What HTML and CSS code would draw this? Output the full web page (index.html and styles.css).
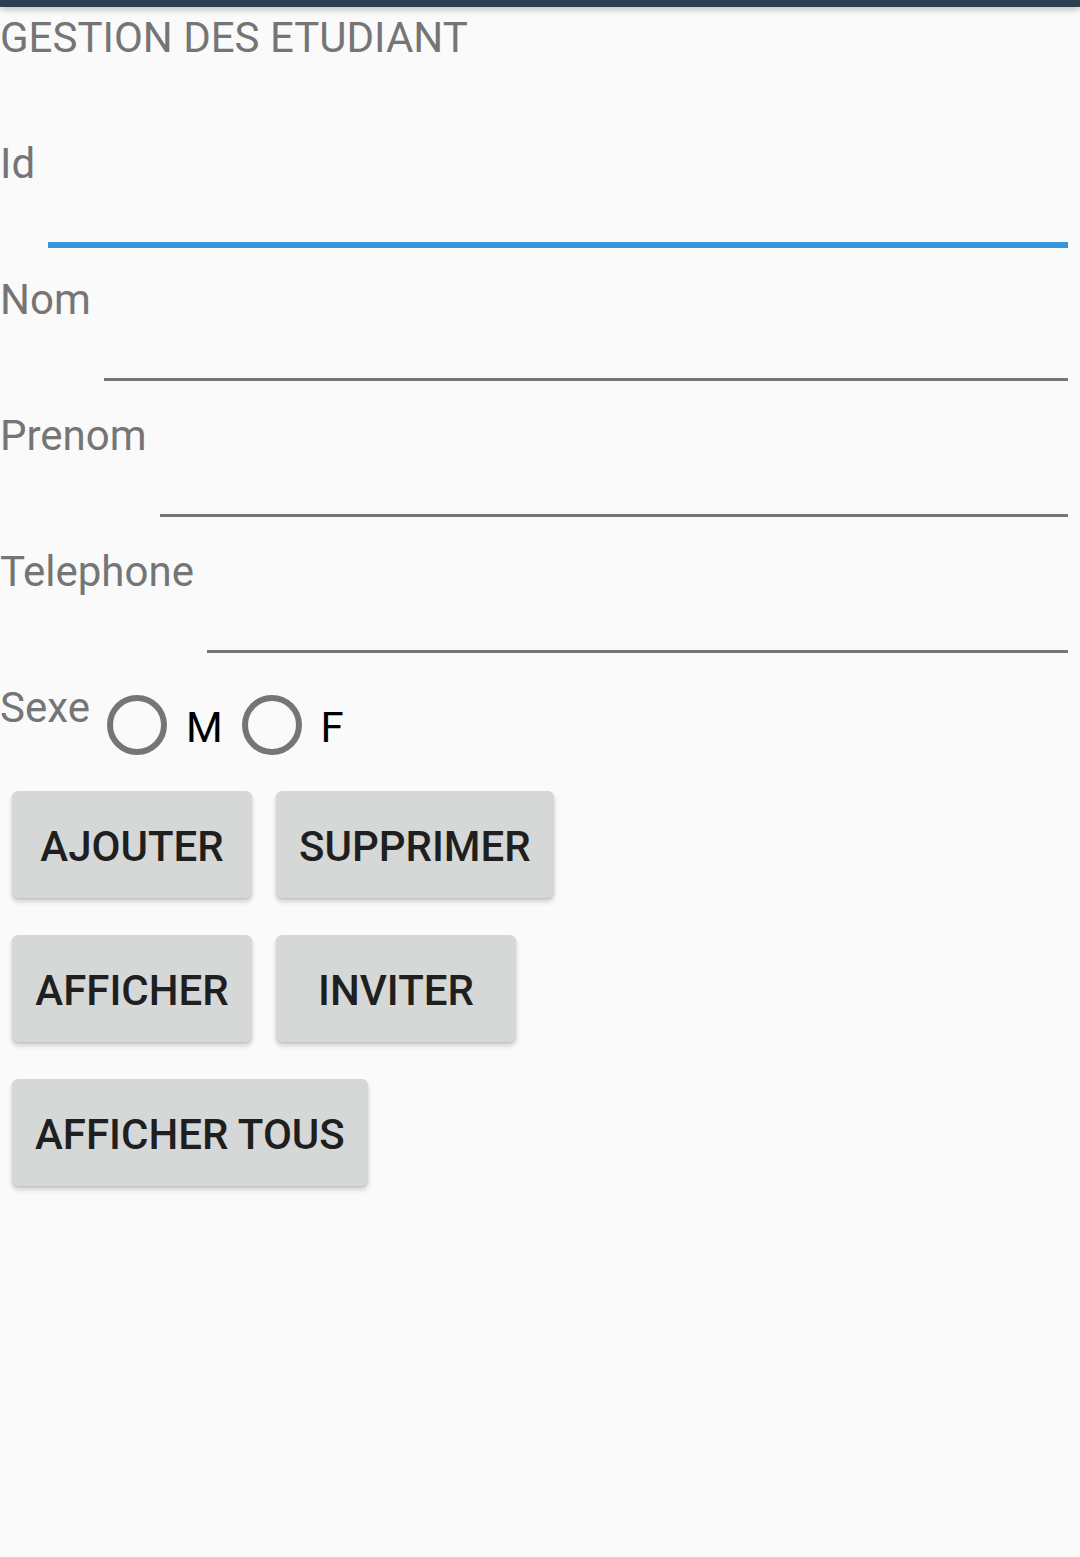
FILE: index.html
```html
<!DOCTYPE html>
<html lang="fr">
<head>
<meta charset="utf-8">
<title>Gestion des etudiant</title>
<link rel="stylesheet" href="styles.css">
</head>
<body>
<div class="topbar"></div>
<main class="screen">
  <h1 class="title">GESTION DES ETUDIANT</h1>

  <div class="field-row">
    <label class="label">Id</label>
    <div class="field field--focused"></div>
  </div>
  <div class="field-row">
    <label class="label">Nom</label>
    <div class="field"></div>
  </div>
  <div class="field-row">
    <label class="label">Prenom</label>
    <div class="field"></div>
  </div>
  <div class="field-row">
    <label class="label">Telephone</label>
    <div class="field"></div>
  </div>

  <div class="sexe-row">
    <span class="label">Sexe</span>
    <div class="radio-group">
      <div class="radio"><span class="radio-circle"></span><span class="radio-text">M</span></div>
      <div class="radio"><span class="radio-circle"></span><span class="radio-text">F</span></div>
    </div>
  </div>

  <div class="btn-row">
    <button class="btn">AJOUTER</button>
    <button class="btn">SUPPRIMER</button>
  </div>
  <div class="btn-row">
    <button class="btn">AFFICHER</button>
    <button class="btn">INVITER</button>
  </div>
  <div class="btn-row">
    <button class="btn">AFFICHER TOUS</button>
  </div>
</main>
</body>
</html>
```

FILE: styles.css
```css
html, body {
  margin: 0;
  padding: 0;
  background: #fafafa;
}

body {
  font-family: Roboto, "Liberation Sans", Arial, sans-serif;
  height: 1557px;
  overflow: hidden;
}

.topbar {
  position: relative;
  z-index: 2;
  height: 7px;
  background: #2c3e50;
  box-shadow: 0 2px 7px rgba(0, 0, 0, 0.28);
}

.screen {
  display: flex;
  flex-direction: column;
}

.title {
  margin: 6px 0 50px 0;
  font-size: 42px;
  font-weight: 400;
  line-height: 49px;
  color: #757575;
}

.field-row {
  display: flex;
  align-items: flex-start;
  height: 136px;
}

.label {
  padding-top: 27px;
  font-size: 42px;
  line-height: 49px;
  color: #757575;
  white-space: nowrap;
}

.field {
  flex: 1;
  margin-left: 13px;
  margin-right: 12px;
  height: 130px;
  border-bottom: 3px solid #757575;
}

.field--focused {
  border-bottom: 6px solid #3498db;
}

.sexe-row {
  display: flex;
  align-items: flex-start;
  height: 117px;
}

.radio-group {
  display: flex;
  margin-left: 17px;
  padding-top: 39px;
}

.radio {
  display: flex;
  align-items: flex-start;
  margin-right: 19px;
}

.radio-circle {
  box-sizing: border-box;
  width: 60px;
  height: 60px;
  border: 6px solid #757575;
  border-radius: 50%;
}

.radio-text {
  margin-left: 19px;
  margin-top: 8px;
  font-size: 42px;
  line-height: 49px;
  color: #000;
}

.btn-row {
  display: flex;
  height: 144px;
}

.btn {
  box-sizing: border-box;
  min-width: 240px;
  height: 107px;
  margin: 18px 12px;
  padding: 4px 23px 0 23px;
  border: none;
  border-radius: 6px;
  background: #d6d7d7;
  color: #1f1f1f;
  font-family: Roboto, "Liberation Sans", Arial, sans-serif;
  font-size: 42px;
  font-weight: 500;
  line-height: 49px;
  box-shadow: 0 4px 5px rgba(0, 0, 0, 0.16), 0 1px 2px rgba(0, 0, 0, 0.12);
}
```
